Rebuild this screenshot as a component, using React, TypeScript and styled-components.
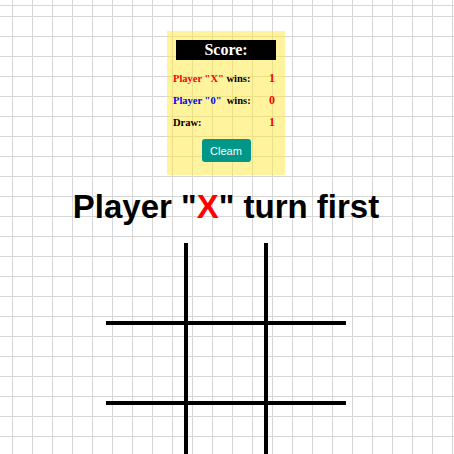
import React from "react";
import styled, { createGlobalStyle } from "styled-components";

const GlobalStyle = createGlobalStyle`
    html, body {
        margin: 0;
        padding: 0;
        overflow: hidden;
    }

    body {
        font-family: "Liberation Serif", serif;
        background-color: #fff;
        background-image:
            linear-gradient(to bottom, transparent 5px, #d6d6d6 5px, #d6d6d6 6px, transparent 6px),
            linear-gradient(to right, #d6d6d6 1px, transparent 1px),
            linear-gradient(to bottom, #d6d6d6 1px, transparent 1px);
        background-size: 100% 100%, 20px 20px, 20px 20px;
        background-position: 0 0, 12px 16px, 12px 16px;
        background-repeat: no-repeat, repeat, repeat;
        min-height: 100vh;
    }
`

const board = ["", "", "", "", "", "", "", "", ""];

export default function App() {
    return (
        <>
            <GlobalStyle />
            <Page>
                <ScoreCard>
                    <ScoreTitle>Score:</ScoreTitle>
                    <ScoreTable>
                        <tbody>
                            <tr>
                                <Label><Who color="red">Player "X"</Who> wins:</Label>
                                <Value>1</Value>
                            </tr>
                            <tr>
                                <Label><Who color="blue">Player "0"</Who>&nbsp; wins:</Label>
                                <Value>0</Value>
                            </tr>
                            <tr>
                                <Label>Draw:</Label>
                                <Value>1</Value>
                            </tr>
                        </tbody>
                    </ScoreTable>
                    <ClearButton>Cleam</ClearButton>
                </ScoreCard>

                <Turn>Player "<Mark>X</Mark>" turn first</Turn>

                <Board>
                    {board.map((cell, i) => (
                        <Cell key={i} index={i}>{cell}</Cell>
                    ))}
                </Board>
            </Page>
        </>
    )
}

const Page = styled.div`
    display: flex;
    flex-direction: column;
    align-items: center;
    padding: 31px 2px 0 0;
`

const ScoreCard = styled.div`
    box-sizing: border-box;
    width: 118px;
    height: 144px;
    padding: 9px 9px 0;
    background: rgba(255, 234, 60, 0.5);
    display: flex;
    flex-direction: column;
    align-items: center;
`

const ScoreTitle = styled.div`
    width: 100%;
    height: 20px;
    line-height: 20px;
    background: #000;
    color: #fff;
    font-weight: 700;
    font-size: 16px;
    text-align: center;
`

const ScoreTable = styled.table`
    width: 106px;
    margin: 7px -3px 0;
    border-collapse: collapse;
    font-size: 10.5px;
    font-weight: 700;

    td {
        height: 22px;
        padding: 0;
    }
`

const Label = styled.td`
    color: #000;
    white-space: nowrap;
`

const Who = styled.span<{ color: string }>`
    color: ${p => p.color};
`

const Value = styled.td`
    color: red;
    text-align: right;
    padding-right: 4px !important;
    font-size: 12px;
`

const ClearButton = styled.button`
    margin-top: 6px;
    width: 49px;
    height: 23px;
    border: none;
    border-radius: 3px;
    background: #009688;
    color: #fff;
    font-family: "Liberation Sans", Arial, sans-serif;
    font-size: 11px;
    padding: 0;
    cursor: pointer;
`

const Turn = styled.h1`
    margin: 13px 0 0;
    font-family: "Liberation Sans", Arial, sans-serif;
    font-size: 33px;
    line-height: 38px;
    font-weight: 700;
    color: #000;
`

const Mark = styled.span`
    color: red;
`

const Board = styled.div`
    margin-top: 17px;
    display: grid;
    grid-template-columns: repeat(3, 80px);
    grid-template-rows: repeat(3, 80px);
`

const Cell = styled.div<{ index: number }>`
    box-sizing: border-box;
    border: 0 solid #000;
    ${p => p.index % 3 !== 0 && "border-left-width: 2px;"}
    ${p => p.index % 3 !== 2 && "border-right-width: 2px;"}
    ${p => p.index > 2 && "border-top-width: 2px;"}
    ${p => p.index < 6 && "border-bottom-width: 2px;"}
`
